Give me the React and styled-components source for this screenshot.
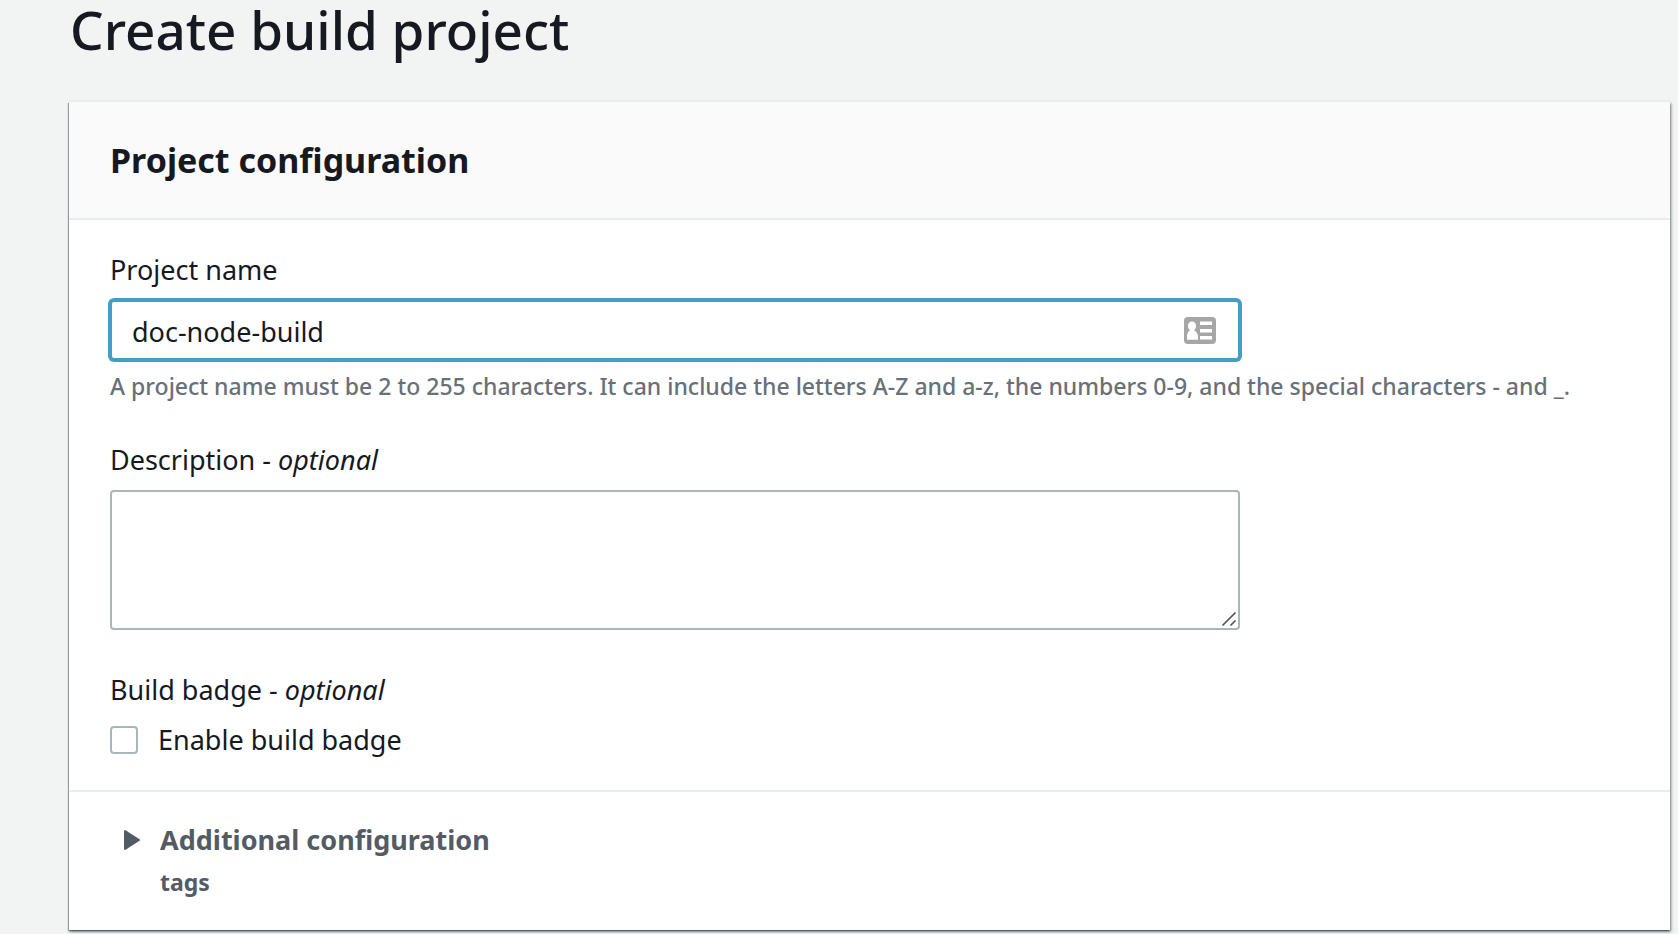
import React, { useState } from "react";
import styled, { createGlobalStyle } from "styled-components";

const GlobalStyle = createGlobalStyle`
  *, *::before, *::after { box-sizing: border-box; }
  body {
    margin: 0;
    background: #f2f4f4;
    color: #16191f;
    font-family: "Noto Sans", "Open Sans", sans-serif;
    font-size: 27px;
    line-height: 44px;
  }
`;

const Page = styled.main`
  padding: 0 8px 4px 69px;
`;

const PageTitle = styled.h1`
  margin: 0;
  padding: 0 1px 42px;
  font-size: 53px;
  font-weight: 500;
  line-height: 60px;
`;

const Card = styled.section`
  background: #fff;
  box-shadow: 0 -2px 0 #eaeded, 0 2px 2px rgba(0, 28, 36, 0.3),
    2px 2px 3px rgba(0, 28, 36, 0.15), -1px 1px 1px rgba(0, 28, 36, 0.3),
    1px 1px 2px rgba(0, 28, 36, 0.3);
`;

const CardHeader = styled.header`
  padding: 36px 40px 36px 41px;
  background: #fafafa;
  border-bottom: 2px solid #eaeded;
`;

const CardTitle = styled.h2`
  margin: 0;
  font-size: 34px;
  font-weight: 700;
  line-height: 44px;
`;

const Fields = styled.div`
  display: flex;
  flex-direction: column;
  gap: 34px;
  padding: 28px 40px 28px 41px;
`;

const Field = styled.div`
  display: flex;
  flex-direction: column;
  gap: 8px;
`;

const Group = styled.fieldset`
  display: flex;
  flex-direction: column;
  min-width: 0;
  margin: 0;
  padding: 0;
  border: 0;
`;

const Label = styled.label`
  align-self: flex-start;
`;

const Legend = styled.legend`
  padding: 4px 0 6px;
`;

const InputFrame = styled.div`
  display: flex;
  align-items: center;
  width: calc(75% - 10px);
  height: 60px;
  padding: 0 22px 0 20px;
  border: 2px solid #aab7b8;
  border-radius: 4px;
  background: #fff;

  &:focus-within {
    border-color: #449fc5;
    box-shadow: 0 0 0 2px #449fc5;
  }
`;

const TextInput = styled.input`
  flex: 1;
  min-width: 0;
  padding: 4px 0 0;
  border: 0;
  outline: 0;
  background: none;
  color: inherit;
  font: inherit;
  caret-color: transparent;
`;

const TextArea = styled.textarea`
  display: block;
  width: calc(75% - 10px);
  height: 140px;
  padding: 8px 20px;
  border: 2px solid #aab7b8;
  border-radius: 4px;
  outline: 0;
  background: #fff;
  color: inherit;
  font: inherit;
  resize: none;
`;

const TextAreaFrame = styled.div`
  position: relative;
`;

const ResizeGrip = styled.svg`
  position: absolute;
  right: calc(25% + 13px);
  bottom: 3px;
  width: 16px;
  height: 16px;
  pointer-events: none;
`;

const Hint = styled.p`
  margin: 0;
  color: #687078;
  font-size: 23px;
  font-weight: 500;
  line-height: 36px;
`;

const CheckRow = styled.div`
  display: flex;
  align-items: center;
  gap: 20px;
`;

const Checkbox = styled.input`
  appearance: none;
  width: 28px;
  height: 28px;
  margin: 0;
  border: 2px solid #aab7b8;
  border-radius: 4px;
  background: #fff;

  &:checked {
    border-color: #0073bb;
    background: #0073bb;
  }
`;

const Expander = styled.button`
  display: flex;
  gap: 20px;
  width: 100%;
  padding: 26px 40px 30px 55px;
  border: 0;
  border-top: 2px solid #eaeded;
  background: none;
  color: #545b64;
  font: inherit;
  font-weight: 700;
  text-align: left;
`;

const Caret = styled.svg`
  flex: none;
  width: 16px;
  height: 44px;
`;

const ExpanderText = styled.span`
  display: flex;
  flex-direction: column;
  gap: 2px;
`;

const ExpanderNote = styled.span`
  font-size: 23px;
  line-height: 36px;
`;

const ContactCard = () => (
  <svg width="32" height="27" viewBox="0 0 32 27" aria-hidden="true">
    <rect width="32" height="27" rx="4" fill="#a6a6a6" />
    <path
      d="M8 4.500c2.400 0 4 1.700 4 4.200 0 2.200-.8 3.700-1.800 4.600C12.500 14.500 14 17 14 20v2.800H3V20c0-3 .8-5.500 3-6.700C4.900 12.400 4 10.900 4 8.700c0-2.500 1.600-4.200 4-4.200z"
      fill="#fff"
    />
    <path d="M16 4.500h12V8H16zM16 12h12v3.500H16zM16 19h12v3.500H16z" fill="#fff" />
  </svg>
);

export default function App() {
  const [name, setName] = useState("doc-node-build");

  return (
    <>
      <GlobalStyle />
      <Page>
        <PageTitle>Create build project</PageTitle>
        <Card>
          <CardHeader>
            <CardTitle>Project configuration</CardTitle>
          </CardHeader>
          <Fields>
            <Field>
              <Label htmlFor="project-name">Project name</Label>
              <InputFrame>
                <TextInput
                  id="project-name"
                  type="text"
                  autoFocus
                  spellCheck={false}
                  aria-describedby="project-name-hint"
                  value={name}
                  onChange={(e) => setName(e.target.value)}
                />
                <ContactCard />
              </InputFrame>
              <Hint id="project-name-hint">
                A project name must be 2 to 255 characters. It can include the letters A-Z and a-z,
                the numbers 0-9, and the special characters - and _.
              </Hint>
            </Field>
            <Field>
              <Label htmlFor="description">
                Description - <em>optional</em>
              </Label>
              <TextAreaFrame>
                <TextArea id="description" />
                <ResizeGrip viewBox="0 0 16 16" aria-hidden="true">
                  <path d="M1.500 14.500L14.500 1.500M9.500 14.500L14.500 9.500" stroke="#555" strokeWidth="1.700" />
                </ResizeGrip>
              </TextAreaFrame>
            </Field>
            <Group>
              <Legend>
                Build badge - <em>optional</em>
              </Legend>
              <CheckRow>
                <Checkbox id="build-badge" type="checkbox" />
                <Label htmlFor="build-badge">Enable build badge</Label>
              </CheckRow>
            </Group>
          </Fields>
          <Expander type="button" aria-expanded="false">
            <Caret viewBox="0 0 16 44" aria-hidden="true">
              <path
                d="M1 13V31L15 22z"
                fill="#545b64"
                stroke="#545b64"
                strokeWidth="2"
                strokeLinejoin="round"
              />
            </Caret>
            <ExpanderText>
              <span>Additional configuration</span>
              <ExpanderNote>tags</ExpanderNote>
            </ExpanderText>
          </Expander>
        </Card>
      </Page>
    </>
  );
}
